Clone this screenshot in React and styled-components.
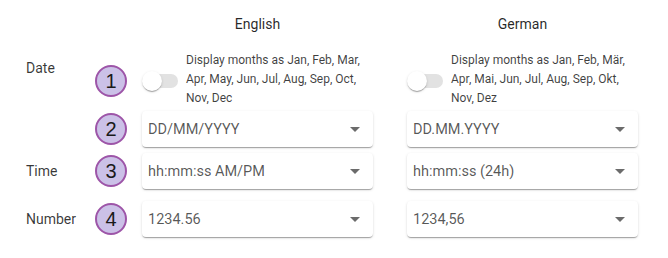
import React from "react";
import styled, { createGlobalStyle } from "styled-components";

const Global = createGlobalStyle`
  html, body { margin: 0; padding: 0; background: #fff; }
  body { font-family: Roboto, "Noto Sans", Arial, sans-serif; }
`;

const Page = styled.div`
  padding: 14px 0 0 26px;
  width: 668px;
  height: 258px;
  box-sizing: border-box;
`;

const Row = styled.div`
  display: flex;
  align-items: center;
  margin-top: ${(p) => p.$mt || 0}px;
  height: ${(p) => p.$h}px;
`;

const Label = styled.div`
  width: 69px;
  flex: none;
  font-size: 14px;
  line-height: 20px;
  color: rgba(0, 0, 0, 0.78);
  align-self: ${(p) => (p.$top ? "flex-start" : "center")};
  padding-top: ${(p) => (p.$top ? "7px" : "0")};
`;

const Badge = styled.div`
  width: 32px;
  height: 32px;
  flex: none;
  box-sizing: border-box;
  border-radius: 50%;
  background: #cbc1e7;
  border: 2px solid #9d55a8;
  display: flex;
  align-items: center;
  justify-content: center;
  font-family: "Liberation Sans", Arial, sans-serif;
  font-size: 20px;
  color: #1a1a1a;
  margin-right: 15px;
  align-self: center;
  margin-top: ${(p) => p.$mt || 0}px;
`;

const Spacer = styled.div`
  width: 116px;
  flex: none;
`;

const Cell = styled.div`
  width: 231px;
  flex: none;
  margin-right: 34px;
  display: flex;
  align-items: center;
`;

const Header = styled(Cell)`
  justify-content: center;
  font-size: 14px;
  font-weight: 400;
  line-height: 20px;
  color: rgba(0, 0, 0, 0.85);
`;

const SwitchWrap = styled.div`
  position: relative;
  width: 36px;
  height: 20px;
  flex: none;
  margin-right: 8px;
  margin-top: 3px;
`;

const Track = styled.div`
  position: absolute;
  left: 2px;
  top: 3px;
  width: 34px;
  height: 14px;
  border-radius: 7px;
  background: #e2e2e2;
`;

const Thumb = styled.div`
  position: absolute;
  left: 0;
  top: 0;
  width: 20px;
  height: 20px;
  border-radius: 50%;
  background: #fff;
  box-shadow: 0 2px 1px -1px rgba(0, 0, 0, 0.2), 0 1px 1px 0 rgba(0, 0, 0, 0.14),
    0 1px 3px 0 rgba(0, 0, 0, 0.12);
`;

const SwitchText = styled.div`
  font-size: 12px;
  line-height: 19px;
  color: rgba(0, 0, 0, 0.75);
  width: 187px;
`;

const Select = styled.div`
  width: 231px;
  height: 36px;
  box-sizing: border-box;
  flex: none;
  margin-right: 34px;
  border-radius: 4px;
  background: #fff;
  box-shadow: 0 2px 1px -1px rgba(0, 0, 0, 0.2), 0 1px 1px 0 rgba(0, 0, 0, 0.14),
    0 1px 3px 0 rgba(0, 0, 0, 0.12);
  display: flex;
  align-items: center;
  justify-content: space-between;
  padding: 0 6px 0 6px;
  font-size: 14.5px;
  color: rgba(0, 0, 0, 0.66);
`;

const Arrow = styled.svg`
  width: 24px;
  height: 24px;
  flex: none;
  fill: rgba(0, 0, 0, 0.58);
`;

const Toggle = ({ children }) => (
  <Cell>
    <SwitchWrap>
      <Track />
      <Thumb />
    </SwitchWrap>
    <SwitchText>{children}</SwitchText>
  </Cell>
);

const Dropdown = ({ value }) => (
  <Select>
    <span>{value}</span>
    <Arrow viewBox="0 0 24 24">
      <path d="M7 10l5 5 5-5z" />
    </Arrow>
  </Select>
);

export default function App() {
  return (
    <Page>
      <Global />
      <Row $h={20}>
        <Spacer />
        <Header>English</Header>
        <Header>German</Header>
      </Row>
      <Row $h={57} $mt={17}>
        <Label $top>Date</Label>
        <Badge $mt={3}>1</Badge>
        <Toggle>Display months as Jan, Feb, Mar, Apr, May, Jun, Jul, Aug, Sep, Oct, Nov, Dec</Toggle>
        <Toggle>Display months as Jan, Feb, Mär, Apr, Mai, Jun, Jul, Aug, Sep, Okt, Nov, Dez</Toggle>
      </Row>
      <Row $h={36} $mt={3}>
        <Label />
        <Badge>2</Badge>
        <Dropdown value="DD/MM/YYYY" />
        <Dropdown value="DD.MM.YYYY" />
      </Row>
      <Row $h={36} $mt={6}>
        <Label>Time</Label>
        <Badge>3</Badge>
        <Dropdown value="hh:mm:ss AM/PM" />
        <Dropdown value="hh:mm:ss (24h)" />
      </Row>
      <Row $h={36} $mt={12}>
        <Label>Number</Label>
        <Badge>4</Badge>
        <Dropdown value="1234.56" />
        <Dropdown value="1234,56" />
      </Row>
    </Page>
  );
}
